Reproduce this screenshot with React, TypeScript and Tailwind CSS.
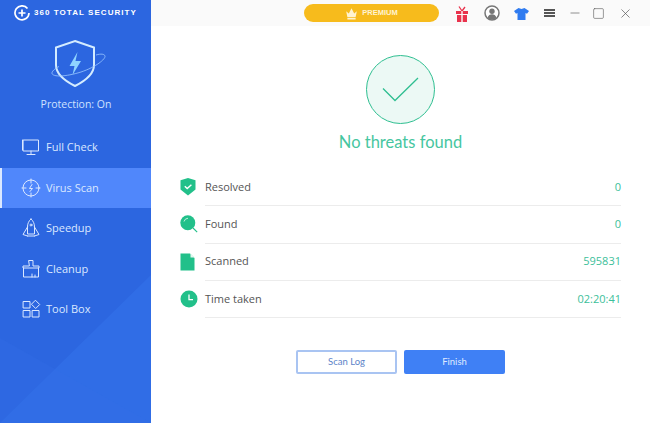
import { Minus, Square, X } from "lucide-react";

type NavItem = {
  title: string;
  icon: React.ReactNode;
  isActive?: boolean;
};

type ResultRow = {
  title: string;
  value: string;
  icon: React.ReactNode;
};

const stroke = {
  fill: "none",
  stroke: "currentColor",
  strokeWidth: 1,
  strokeLinejoin: "round" as const,
  strokeLinecap: "round" as const,
};

const navItems: NavItem[] = [
  {
    title: "Full Check",
    icon: (
      <svg width="20" height="20" viewBox="0 0 20 20" {...stroke}>
        <path d="M2.500 3h15v11h-15zM1.500 3v10M10 14v3M6 17.500h8" />
      </svg>
    ),
  },
  {
    title: "Virus Scan",
    isActive: true,
    icon: (
      <svg width="20" height="20" viewBox="0 0 20 20" {...stroke}>
        <circle cx="10" cy="10" r="8" />
        <path d="M10 1v4M10 15v4M1 10h4M15 10h4" />
        <path d="M11 6.500 8.500 10.500h3L9 13.500" />
      </svg>
    ),
  },
  {
    title: "Speedup",
    icon: (
      <svg width="20" height="20" viewBox="0 0 20 20" {...stroke}>
        <path d="M10 1c2.500 2 3.500 5 3.500 8v7h-7V9c0-3 1-6 3.500-8z" />
        <path d="M6.500 9 2 16.500 6.500 18M13.500 9 18 16.500 13.500 18M6.500 18h7" />
        <circle cx="10" cy="7" r="1" />
      </svg>
    ),
  },
  {
    title: "Cleanup",
    icon: (
      <svg width="20" height="20" viewBox="0 0 20 20" {...stroke}>
        <path d="M8 1.500h4V7h6v2H2V7h6zM2.500 9v9h15V9" />
        <path d="M11 18v-3M14 18v-2" />
      </svg>
    ),
  },
  {
    title: "Tool Box",
    icon: (
      <svg width="20" height="20" viewBox="0 0 20 20" {...stroke}>
        <path d="M2.500 2.500h6.500v6.500H2.500zM2.500 11.500h6.500v6.500H2.500zM11.500 11.500H18v6.500h-6.500zM14.700 1.500l4 4-4 4-4-4z" />
      </svg>
    ),
  },
];

const resultRows: ResultRow[] = [
  {
    title: "Resolved",
    value: "0",
    icon: (
      <svg width="16" height="18" viewBox="0 0 16 18">
        <path d="M0.500 2.200 8 0l7.500 2.200v9.300L8 17.500l-7.500-6z" fill="#22c08a" />
        <path d="M4.800 8.200 7.200 10.500 11.400 6.700" fill="none" stroke="#fff" strokeWidth="1.400" />
      </svg>
    ),
  },
  {
    title: "Found",
    value: "0",
    icon: (
      <svg width="18" height="18" viewBox="0 0 18 18">
        <circle cx="7.800" cy="7.800" r="7.500" fill="#22c08a" />
        <path d="M4 6.500A4.500 4.500 0 0 1 8 3.200" fill="none" stroke="#bff0dc" strokeWidth="1" />
        <path d="m13 13 4.200 4.200" stroke="#22c08a" strokeWidth="1.100" />
      </svg>
    ),
  },
  {
    title: "Scanned",
    value: "595831",
    icon: (
      <svg width="15" height="18" viewBox="0 0 15 18">
        <path d="M0.500 0.500h9.500l4.500 4.500v12.500H0.500z" fill="#22c08a" />
        <path d="M10.500 0.500v4h4z" fill="#e2f8ef" />
      </svg>
    ),
  },
  {
    title: "Time taken",
    value: "02:20:41",
    icon: (
      <svg width="18" height="18" viewBox="0 0 18 18">
        <circle cx="9" cy="9" r="8.500" fill="#22c08a" />
        <path d="M9 4.500v5.200h4" fill="none" stroke="#fff" strokeWidth="1.300" />
      </svg>
    ),
  },
];

const Sidebar = () => {
  return (
    <aside className="relative w-[151px] shrink-0 h-full bg-[#2c66e0] text-[#dbe8ff] overflow-hidden">
      <svg className="absolute left-0 bottom-0" width="151" height="163" viewBox="0 0 151 163">
        <path d="M0 163 151 15v148z" fill="#3270e8" opacity="0.75" />
        <path d="M0 78 151 163H0z" fill="#3270e8" opacity="0.25" />
      </svg>
      <div className="relative">
        <div className="flex items-center h-[26px] pl-[14px] gap-[4px] text-white">
          <svg width="16" height="16" viewBox="0 0 16 16" fill="none" stroke="currentColor" strokeWidth="1.700">
            <path d="M13.500 3.500A7 7 0 1 0 15 8" />
            <path d="M8 4.500v7M4.500 8h7" />
          </svg>
          <span className="font-['Liberation_Sans',sans-serif] font-bold text-[8px] tracking-[1.050px] whitespace-nowrap">
            360 TOTAL SECURITY
          </span>
        </div>
        <div className="flex flex-col items-center h-[101px] pl-[1px]">
          <svg className="mt-[13px]" width="66" height="50" viewBox="0 0 66 50" fill="none">
            <path d="M32 2 51 8.500V26c0 9-9 16-19 21-10-5-19-12-19-21V8.500z" stroke="#d4ecff" strokeWidth="2" />
            <path d="M34.500 13 26.500 27h5l-2 9 8.500-14h-5.500z" fill="#8fd4ff" />
            <path d="M53 16c5-1.500 8.500-1 9 1 .7 3-9 11-24 16-16 5-28 5-29 1.500-.5-2 3-5 7-7" stroke="#9cc8ff" strokeWidth="0.800" />
          </svg>
          <div className="mt-[8px] font-['Open_Sans',sans-serif] text-[10.500px] text-[#cfe2ff]">Protection: On</div>
        </div>
        <nav className="flex flex-col">
          {navItems.map((item) => {
            let className = "h-[40.500px] flex items-center gap-[5px] font-['Open_Sans',sans-serif] text-[11px]";
            className += item.isActive ? " bg-[#5087fb] border-l-2 border-[#dbe8ff] pl-[19px]" : " pl-[21px]";

            return (
              <div key={item.title} className={className}>
                {item.icon}
                <span>{item.title}</span>
              </div>
            );
          })}
        </nav>
      </div>
    </aside>
  );
};

const TopBar = () => {
  return (
    <div className="h-[26px] bg-[#fafafa] flex items-center pl-[153px] text-[#555]">
      <div className="w-[135px] h-[18px] rounded-full bg-[#f7bb1c] flex items-center justify-center gap-[4px] text-[#fff3d0]">
        <svg width="13" height="13" viewBox="0 0 11 11" fill="currentColor">
          <path d="M1 3.500 3.200 5.500 5.500 1l2.300 4.500L10 3.500 9 8.500H2zM2 9h7v1.500H2z" />
        </svg>
        <span className="font-['Liberation_Sans',sans-serif] font-bold text-[7.500px]">PREMIUM</span>
      </div>
      <svg className="ml-[16px]" width="14" height="17" viewBox="0 0 14 17" fill="#e9334d">
        <path d="M1 6h12v3H1zM2 10h10v7H2z" />
        <path d="M7 6 4 1.500M7 6l3-4" fill="none" stroke="#e9334d" strokeWidth="1.300" />
        <path d="M6.300 6h1.400v11H6.300z" fill="#fafafa" />
      </svg>
      <svg className="ml-[15px]" width="16" height="16" viewBox="0 0 16 16">
        <circle cx="8" cy="8" r="7" fill="#fff" stroke="#777" strokeWidth="1.500" />
        <circle cx="8" cy="6.300" r="2.700" fill="#777" />
        <path d="M3.500 13c.7-3 2.500-3.800 4.500-3.800s3.800.8 4.500 3.800a6.500 6.500 0 0 1-9 0z" fill="#777" />
      </svg>
      <svg className="ml-[14px]" width="15" height="13" viewBox="0 0 15 13" fill="#2f7bf0">
        <path d="M4.500 1 7.500 2 10.500 1 15 4l-2 2.800-1.500-.8V13h-8V6L2 6.800 0 4z" />
      </svg>
      <div className="ml-[15px] w-[11px] flex flex-col gap-[1.500px]">
        <div className="h-[1.500px] bg-[#555]" />
        <div className="h-[1.500px] bg-[#555]" />
        <div className="h-[1.500px] bg-[#555]" />
      </div>
      <Minus className="ml-[13px]" size={14} strokeWidth={1.100} />
      <Square className="ml-[10px]" size={13} strokeWidth={1.100} />
      <X className="ml-[13px]" size={15} strokeWidth={1.100} />
    </div>
  );
};

const App = () => {
  return (
    <div className="relative w-[650px] h-[423px] flex bg-white overflow-hidden">
      <Sidebar />
      <main className="flex-1 min-w-0 flex flex-col">
        <TopBar />
        <div className="flex flex-col items-center pt-[1px]">
          <div className="w-[69px] h-[69px] mt-[28px] rounded-full border-[1.500px] border-[#2fbf91] bg-[#ecf9f5] flex items-center justify-center">
            <svg width="37" height="25" viewBox="0 0 37 25" fill="none" stroke="#2fbf91" strokeWidth="1.300">
              <path d="M1 11.500 13 23.500 36 1" />
            </svg>
          </div>
          <div className="mt-[6px] font-['Lato',sans-serif] text-[16.500px] leading-[24px] text-[#46c6a0]">No threats found</div>
        </div>
        <div className="flex flex-col mt-[15px] pl-[29px] pr-[29px] font-['Open_Sans',sans-serif] text-[11px]">
          {resultRows.map((row) => (
            <div key={row.title} className="flex items-center h-[37.300px]">
              <div className="w-[25px] flex justify-start -mt-[1px]">{row.icon}</div>
              <div className="flex-1 h-full flex items-center justify-between border-b border-[#ececec]">
                <span className="text-[#555]">{row.title}</span>
                <span className="text-[#3cc09a]">{row.value}</span>
              </div>
            </div>
          ))}
        </div>
        <div className="flex justify-center gap-[7px] mt-[32px] font-['Lato',sans-serif] text-[9.500px]">
          <button className="w-[101px] h-[24px] rounded-[2px] border-2 border-[#a9c4f2] bg-white text-[#5d84c8]">Scan Log</button>
          <button className="w-[101px] h-[24px] rounded-[2px] bg-[#3f80f5] text-[#dfeaff]">Finish</button>
        </div>
      </main>
    </div>
  );
};

export default App;
